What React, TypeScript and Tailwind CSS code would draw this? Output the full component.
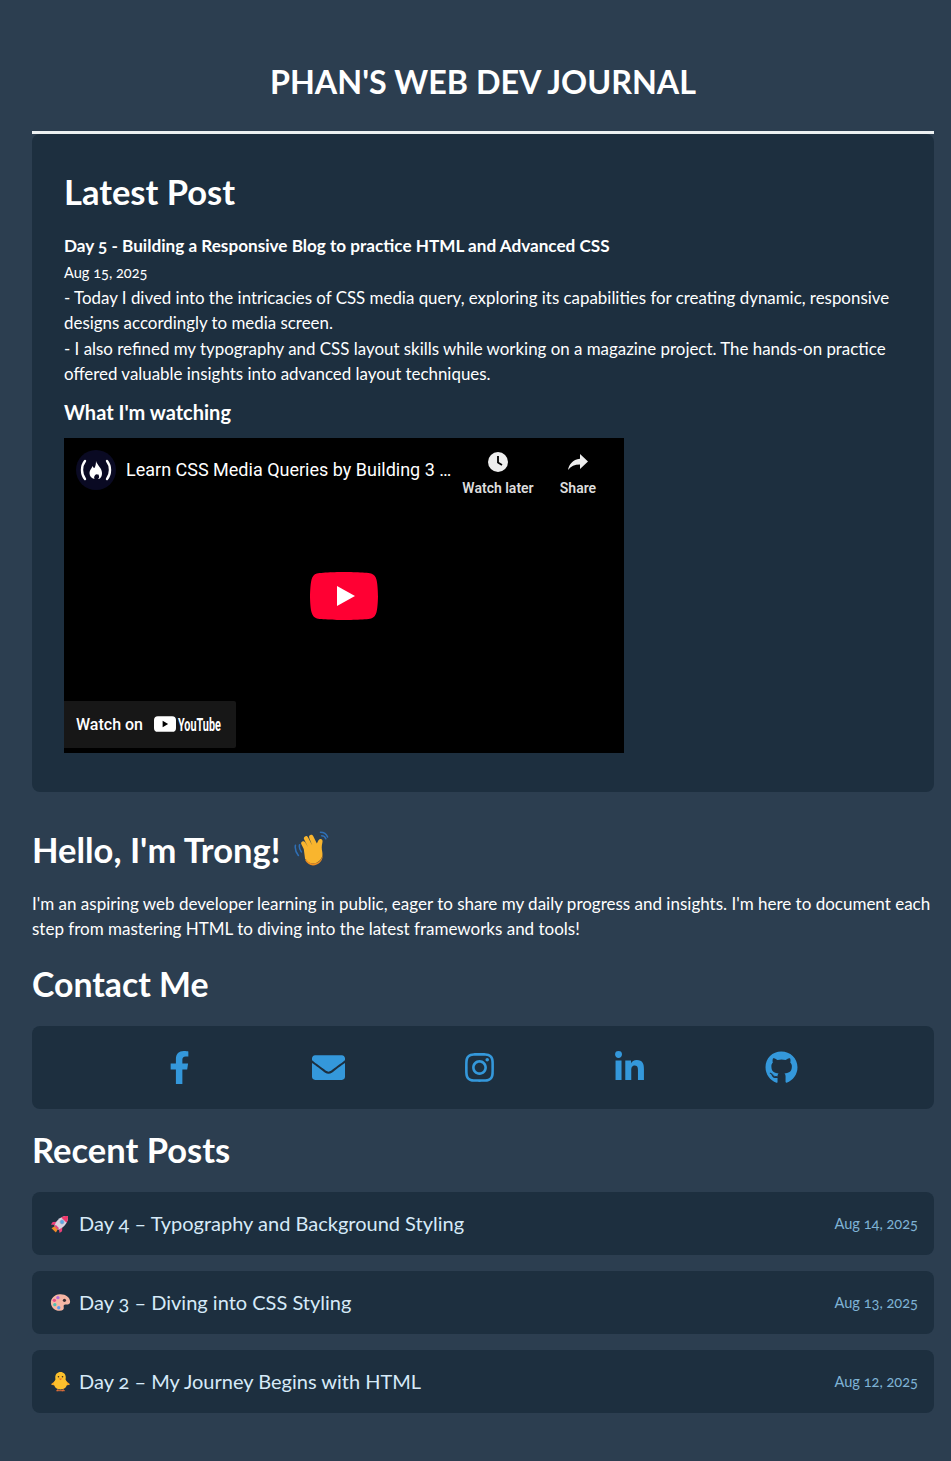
import type { ReactNode } from "react";
import { FaFacebookF, FaEnvelope, FaInstagram, FaLinkedinIn, FaGithub } from "react-icons/fa";

const font = "font-['Lato','Noto_Sans',sans-serif]";

function Rocket() {
  return (
    <svg viewBox="0 0 24 24" className="w-[21px] h-[21px]">
      <g transform="rotate(45 12 12)">
        <path d="M9.500 19h5l1 4h-7z" fill="#f28c28" />
        <path d="M8 13l-3.500 4 .5 3.500L8.500 18zM16 13l3.500 4-.5 3.500L15.500 18z" fill="#ec407a" />
        <path d="M12 0c3.800 3 5 7.500 5 11 0 3-1 6-2 8H9c-1-2-2-5-2-8 0-3.500 1.200-8 5-11z" fill="#d8d3e0" />
        <path d="M12 0c2.300 1.800 3.600 4.100 4.300 6.500H7.700C8.400 4.100 9.700 1.800 12 0z" fill="#f0386b" />
        <path d="M9 19h6l-.6-2H9.600z" fill="#ec407a" />
        <circle cx="12" cy="9.500" r="2.300" fill="#5aa9e6" stroke="#9aa8c4" strokeWidth=".7" />
      </g>
    </svg>
  );
}

function Palette() {
  return (
    <svg viewBox="0 0 24 24" className="w-[21px] h-[21px]">
      <path d="M11 2.500c6.500-.5 12 3.500 12 8.500 0 3-3 3.500-5 3.200-2-.3-2.800 1-2.300 2.800.6 2.300-1 4.500-4.700 4.500C5.500 21.500 1 17.500 1 12 1 7 5 3 11 2.500z" fill="#f6b6a4" />
      <circle cx="9" cy="6.500" r="1.900" fill="#b56bd6" />
      <circle cx="5" cy="9.500" r="1.900" fill="#ec4f8b" />
      <circle cx="5.500" cy="14.500" r="1.900" fill="#4fc0b5" />
      <circle cx="10" cy="18" r="1.900" fill="#5a9bea" />
      <circle cx="16.500" cy="9.500" r="1.800" fill="#3a2f33" />
    </svg>
  );
}

function Chick() {
  return (
    <svg viewBox="0 0 24 24" className="w-[21px] h-[21px]">
      <path d="M9 20.500v2H7.500h6M15 20.500v2h-1.500h3" stroke="#e2703a" strokeWidth="1.100" fill="none" strokeLinecap="round" />
      <path d="M6 11 1 15c2 1.500 4 1.500 6 .5zM18 11l5 4c-2 1.500-4 1.500-6 .5z" fill="#f5a623" />
      <path d="M12 1c3.600 0 6 2.800 6 6 0 1.300-.3 2-.1 3 .6 1.200 1.600 2.600 1.600 4.500 0 4-3.500 6.500-7.500 6.500s-7.500-2.500-7.500-6.500c0-1.900 1-3.300 1.600-4.500.2-1-.1-1.700-.1-3 0-3.200 2.400-6 6-6z" fill="#fbc02d" />
      <circle cx="9.700" cy="6.500" r=".9" fill="#3a2a1a" />
      <circle cx="14.300" cy="6.500" r=".9" fill="#3a2a1a" />
      <path d="M10 8.500h4l-2 2.200z" fill="#ef6c2f" />
    </svg>
  );
}

function Wave() {
  return (
    <svg viewBox="2 2 29 31" className="w-[35px] h-[37px]">
      <path d="M3 14c-.5 3 .5 6 2.500 8.500M6.500 13.500c-.5 2 0 4 1.500 6M24 3c2.500 0 5 1.500 6 4M25 6c1.500 0 3 1 3.500 2.500" stroke="#2f6fb5" strokeWidth="1.300" fill="none" strokeLinecap="round" />
      <path d="M10 17 8 13c-.6-1.200.2-2.500 1.500-2.500.7 0 1.300.3 1.700 1l2.300 4-3.200-6.500c-.6-1.200 0-2.500 1.300-2.700.8-.1 1.500.3 1.900 1l3.600 6.700-2.500-6.200c-.5-1.200.2-2.400 1.400-2.600.8-.1 1.500.3 1.900 1l3.100 6.300 1.200-2.500c.6-1.300 1.800-1.700 2.700-1.100 1 .6 1 1.700.7 3-.7 2.800-.6 5-.1 7.500.8 4-1 7.500-4.700 9.100-4 1.700-7.500.3-9.700-3.300z" fill="#f9b52e" />
      <path d="M12 25.500c2 3.300 5.300 4.600 9 3.100 3.200-1.300 4.900-4.100 4.600-7.500.9 4-1 7.400-4.600 9-4 1.700-7.500.3-9.700-3.300z" fill="#ef8f1f" />
    </svg>
  );
}

function Post({ emoji, title, date }: { emoji: ReactNode; title: string; date: string }) {
  return (
    <div className="flex items-center justify-between bg-[#1d2f3f] rounded-lg pl-[18px] pr-4 h-[63px]">
      <div className="flex items-center text-[#d6eaf8] text-[20px]">
        <span className="w-[29px] flex items-center">{emoji}</span>
        <span>{title}</span>
      </div>
      <span className="text-[#7fb3d5] text-[14.6px] mt-[1px]">{date}</span>
    </div>
  );
}

export default function App() {
  return (
    <div className={`${font} [font-variant-numeric:oldstyle-nums] bg-[#2c3e50] min-h-[1461px] text-white pl-8 pr-[17px] pt-[62px]`}>
      <h1 className="text-[32.3px] leading-[40px] font-bold text-center uppercase border-b-[3px] border-[#ecf0f1] pb-[29px]">Phan's Web Dev Journal</h1>
      <section className="bg-[#1d2f3f] rounded-lg px-8 pt-[38px] pb-[39px]">
        <h2 className="text-[34.5px] leading-[40px] font-bold">Latest Post</h2>
        <p className="text-[17.15px] leading-[25px] font-bold mt-[21px]">Day 5 - Building a Responsive Blog to practice HTML and Advanced CSS</p>
        <p className="text-[14.6px] leading-[23.5px] mt-[3px]">Aug 15, 2025</p>
        <p className="text-[16.9px] leading-[25.5px]">- Today I dived into the intricacies of CSS media query, exploring its capabilities for creating dynamic, responsive designs accordingly to media screen.<br />- I also refined my typography and CSS layout skills while working on a magazine project. The hands-on practice offered valuable insights into advanced layout techniques.</p>
        <h3 className="text-[20px] leading-[26px] font-bold mt-[12px]">What I'm watching</h3>
        <div className="relative w-[560px] h-[315px] bg-black mt-[13px] font-['Roboto',sans-serif] [font-variant-numeric:normal]">
          <div className="flex items-center h-[64px] pl-3">
            <svg viewBox="0 0 40 40" className="w-[40px] h-[40px] shrink-0">
              <circle cx="20" cy="20" r="20" fill="#0a0a23" />
              <path d="M9 11C5 16 5 24 9 29M31 11c4 5 4 13 0 18" stroke="#fff" strokeWidth="2.400" fill="none" strokeLinecap="round" />
              <path d="M20 11c1 4 6 7 6 12 0 4-2 6-4 6 1.500-1 1.500-3 0-5-.5 1-1.500 1-1.500 0-2 1-3 3-2 5-3-.5-5-3-5-6 0-3 2-4 3-7 .5 1 1 2 2 2 1-2 1.500-4 1.500-7z" fill="#fff" />
            </svg>
            <span className="ml-[10px] text-[18px] w-[326px] shrink-0 whitespace-nowrap overflow-hidden text-ellipsis">Learn CSS Media Queries by Building 3 Projects</span>
            <div className="flex flex-col items-center w-[80px] shrink-0 ml-[6px] self-start mt-[12px]">
              <svg viewBox="0 0 24 24" className="w-6 h-6"><circle cx="12" cy="12" r="10" fill="#eee" /><path d="M12 6v6.500l4 2.400" stroke="#000" strokeWidth="1.800" fill="none" /></svg>
              <span className="text-[14px] leading-[21px] font-semibold text-[#ddd] mt-[4px] whitespace-nowrap">Watch later</span>
            </div>
            <div className="flex flex-col items-center w-[60px] shrink-0 ml-[10px] self-start mt-[12px]">
              <svg viewBox="0 0 24 24" className="w-6 h-6"><path d="M14 4l8 7.500-8 7.500v-4.500c-5.500 0-9 1.800-12 5.500 1-5.500 4.500-10.500 12-11.300z" fill="#eee" /></svg>
              <span className="text-[14px] leading-[21px] font-semibold text-[#ddd] mt-[4px]">Share</span>
            </div>
          </div>
          <svg viewBox="0 0 68 48" className="absolute left-[246px] top-[134px] w-[68px] h-[48px]">
            <path d="M66.500 7.700c-.8-2.900-2.500-5.400-5.400-6.200C55.800.1 34 0 34 0S12.200.1 6.900 1.600c-3 .7-4.600 3.200-5.400 6.100C.1 13 0 24 0 24s.1 11 1.500 16.300c.8 2.900 2.500 5.400 5.400 6.200C12.200 47.900 34 48 34 48s21.800-.1 27.100-1.500c2.900-.8 4.600-3.300 5.400-6.200C67.900 35 68 24 68 24s-.1-11-1.500-16.300z" fill="#f03" />
            <path d="M45 24 27 14v20" fill="#fff" />
          </svg>
          <div className="absolute left-0 bottom-[5px] w-[172px] h-[47px] bg-[#171717] rounded-r-[2px] flex items-center pl-3">
            <span className="text-[16px] font-medium whitespace-nowrap shrink-0 mt-[1px]">Watch on</span>
            <svg viewBox="0 0 28 20" className="w-[22px] h-[16px] ml-[11px] shrink-0"><rect width="28" height="20" rx="5" fill="#fff" /><path d="M11 6v8l7-4z" fill="#000" /></svg>
            <span className="text-[19px] leading-[20px] font-bold ml-[2px] whitespace-nowrap shrink-0 scale-x-[0.57] origin-left translate-y-[1px] w-[44px]">YouTube</span>
          </div>
        </div>
      </section>
      <h2 className="text-[34.5px] leading-[40px] font-bold mt-[38px] flex items-center">Hello, I'm Trong!<span className="ml-[14px] flex"><Wave /></span></h2>
      <p className="text-[17px] leading-[25.5px] mt-[21px]">I'm an aspiring web developer learning in public, eager to share my daily progress and insights. I'm here to document each step from mastering HTML to diving into the latest frameworks and tools!</p>
      <h2 className="text-[33.8px] leading-[40px] font-bold mt-[22px]">Contact Me</h2>
      <div className="bg-[#1d2f3f] rounded-lg h-[83px] mt-[22px] flex items-center text-[#3498db]">
        <div className="flex items-center ml-[131px]">
          <FaFacebookF size={33} />
          <FaEnvelope size={33} className="ml-[116px]" />
          <FaInstagram size={33} className="ml-[118px]" />
          <FaLinkedinIn size={33} className="ml-[117px]" />
          <FaGithub size={33} className="ml-[119px]" />
        </div>
      </div>
      <h2 className="text-[34.5px] leading-[40px] font-bold mt-[21px]">Recent Posts</h2>
      <div className="flex flex-col gap-4 mt-[22px]">
        <Post emoji={<Rocket />} title="Day 4 – Typography and Background Styling" date="Aug 14, 2025" />
        <Post emoji={<Palette />} title="Day 3 – Diving into CSS Styling" date="Aug 13, 2025" />
        <Post emoji={<Chick />} title="Day 2 – My Journey Begins with HTML" date="Aug 12, 2025" />
      </div>
    </div>
  );
}
